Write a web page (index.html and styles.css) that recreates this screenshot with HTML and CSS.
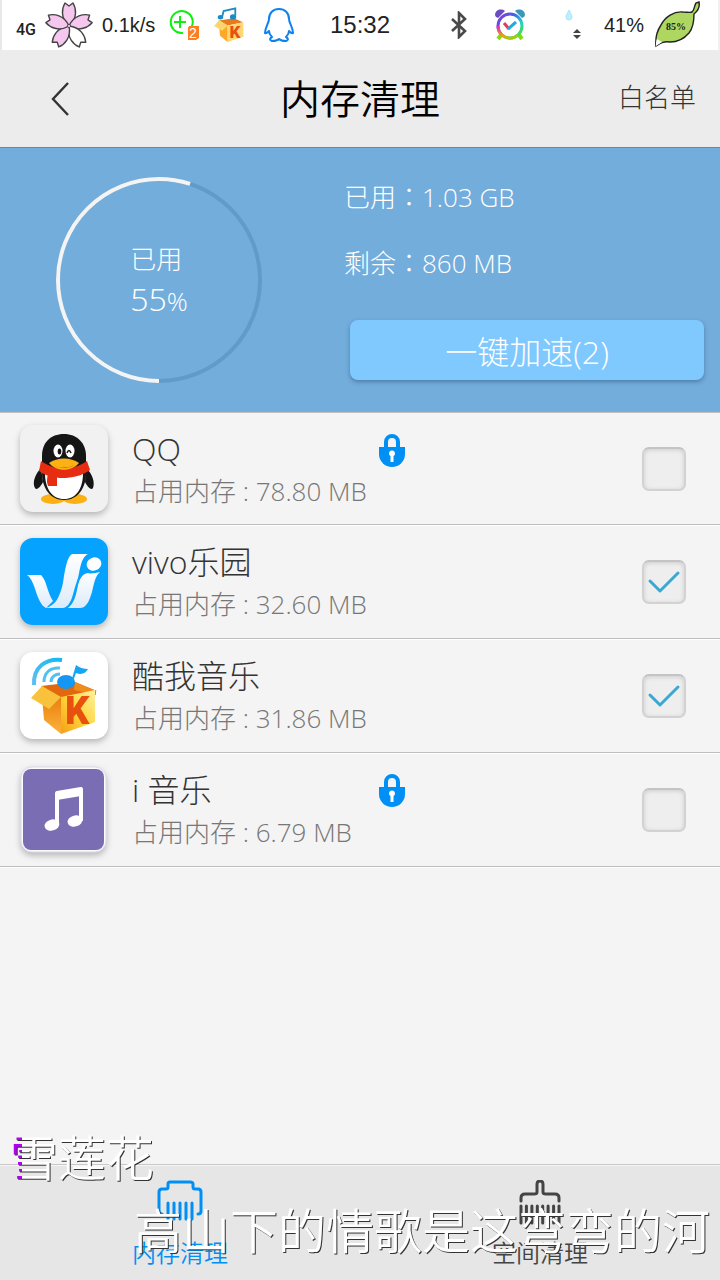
FILE: index.html
```html
<!DOCTYPE html>
<html lang="zh-CN">
<head>
  <meta charset="utf-8">
  <meta name="viewport" content="width=device-width, initial-scale=1">
  <title>内存清理</title>
  <link rel="stylesheet" href="styles.css">
</head>
<body>
  <div class="screen">
    <div class="status-bar">
      <div class="status-left">
        <span class="network">4G</span>
        <svg class="flower" width="48" height="48" viewBox="0 0 48 48" fill="#f5c6ee" stroke="#444" stroke-width="1.4" stroke-linejoin="round">
          <path d="M24 25C15 17 17 7 20 2l4 3 4-3c3 5 5 15-4 23z"/>
          <path transform="rotate(72 24 25)" d="M24 25C15 17 17 7 20 2l4 3 4-3c3 5 5 15-4 23z"/>
          <path transform="rotate(144 24 25)" fill="#fff" d="M24 25C15 17 17 7 20 2l4 3 4-3c3 5 5 15-4 23z"/>
          <path transform="rotate(216 24 25)" d="M24 25C15 17 17 7 20 2l4 3 4-3c3 5 5 15-4 23z"/>
          <path transform="rotate(288 24 25)" d="M24 25C15 17 17 7 20 2l4 3 4-3c3 5 5 15-4 23z"/>
          <circle cx="24" cy="25" r="1.5" fill="#fff" stroke-width="1"/>
        </svg>
        <span class="speed">0.1k/s</span>
        <svg class="battery-guard" width="32" height="32" viewBox="0 0 32 32">
          <path d="M23 19A11 11 0 1 0 15 24" fill="none" stroke="#0cf00c" stroke-width="2"/>
          <path d="M12 7v12M6 13h12" stroke="#0cf00c" stroke-width="2"/>
          <path d="M21 17h10v12l-3 2h-8V19z" fill="#ff7f1e"/>
          <text x="21" y="29" class="badge-text">2</text>
        </svg>
        <svg class="mini-box" width="36" height="36" viewBox="9 4 70 80">
          <path d="M21 34L55 29 75 38 41 45z" fill="#e67a1c"/>
          <path d="M22 45l19 0v37L24 68z" fill="#ffa726"/>
          <path d="M41 45l35-7v32L41 82z" fill="#ffd873"/>
          <path d="M11 46l11-13 19 12-12 12z" fill="#fbd66d"/>
          <path d="M29 25l3-12 26-6v16" fill="none" stroke="#1a8cc4" stroke-width="4"/>
          <ellipse cx="25" cy="27" rx="6" ry="5" fill="#1a8cc4"/>
          <ellipse cx="53" cy="26" rx="7" ry="6" fill="#1a8cc4"/>
          <text x="45" y="73" class="box-letter">K</text>
        </svg>
        <svg class="mini-qq" width="30" height="34" viewBox="0 0 30 34" fill="none" stroke="#0d80f2" stroke-width="2" stroke-linejoin="round">
          <path d="M15 1C9 1 5 5 5 11c0 4-4 8-4 14 1 1 3-1 4-2 0 3 1 4 3 6-2 1-3 3 0 4 3 0 5 0 7-2 2 2 4 2 7 2 3-1 2-3 0-4 2-2 3-3 3-6 1 1 3 3 4 2 0-6-4-10-4-14C25 5 21 1 15 1z"/>
        </svg>
      </div>
      <span class="clock">15:32</span>
      <div class="status-right">
        <svg class="bluetooth" width="16" height="28" viewBox="0 0 16 28" fill="none" stroke="#4a4a4a" stroke-width="2.6">
          <path d="M1 8l13 12-6 6V2l6 6L1 20"/>
        </svg>
        <svg class="alarm" width="30" height="34" viewBox="0 0 30 34">
          <defs>
            <linearGradient id="rainbow" x1="0" y1="0" x2="1" y2="1">
              <stop offset="0" stop-color="#9b30d9"/>
              <stop offset=".35" stop-color="#3d63e8"/>
              <stop offset=".65" stop-color="#21cfd0"/>
              <stop offset="1" stop-color="#5ae014"/>
            </linearGradient>
            <linearGradient id="warm" x1="1" y1="1" x2="0" y2="0">
              <stop offset="0" stop-color="#7fdd10"/>
              <stop offset=".5" stop-color="#f8a000"/>
              <stop offset="1" stop-color="#e52cb6"/>
            </linearGradient>
          </defs>
          <path d="M0 7C0 2 6 0 10 3L3 10Q0 9 0 7z" fill="#684cc0"/>
          <path d="M30 7c0-5-6-7-10-4l7 7q3-1 3-3z" fill="#3b98b9"/>
          <path d="M6 27l-3 4M24 27l3 4" stroke="#7fdd10" stroke-width="4"/>
          <circle cx="15" cy="18" r="12" fill="#fff" stroke="url(#rainbow)" stroke-width="3"/>
          <path d="M3 18a12 12 0 0 0 20 9" fill="none" stroke="url(#warm)" stroke-width="3"/>
          <path d="M9 15l5 6" stroke="#e63b52" stroke-width="3"/>
          <path d="M13 21l8-7" stroke="#28a8e0" stroke-width="3"/>
        </svg>
        <svg class="drop" width="18" height="30" viewBox="0 0 18 30">
          <path d="M4 0c2 4 3 5 3 7a3 3 0 0 1-6 0c0-2 1-3 3-7z" fill="#bcefff" stroke="#a8e8f8"/>
          <path d="M12 19l4 4H8zM12 29l4-4H8z" fill="#444"/>
        </svg>
        <span class="percent">41%</span>
        <svg class="leaf" width="46" height="48" viewBox="0 0 46 48">
          <path d="M2 45C1 36 3 30 7 24 11 16 20 10 29 11c4 0 7 1 9 0 3-3 2-6 4-9l3-1c1 5-1 9-5 12 0 7-1 14-5 19-6 7-12 9-19 9-6-1-9 1-14 4z" fill="#add760" stroke="#222" stroke-width="1.4"/>
          <path d="M2 45c0-3 0-5 1-7l5 3z" fill="#fff"/>
          <text x="22" y="29" text-anchor="middle" class="leaf-text">85%</text>
        </svg>
      </div>
    </div>

    <header class="title-bar">
      <button type="button" class="back" aria-label="返回">
        <svg width="20" height="34" viewBox="0 0 20 34" fill="none" stroke="#333" stroke-width="2.4">
          <path d="M18 1L3 17l15 16"/>
        </svg>
      </button>
      <h1>内存清理</h1>
      <a href="#" class="whitelist">白名单</a>
    </header>

    <section class="summary">
      <div class="ring">
        <svg viewBox="0 0 206 206" fill="none" stroke-width="4">
          <circle cx="103" cy="103" r="101" stroke="#609bca"/>
          <circle class="ring-used" cx="103" cy="103" r="101" pathLength="100"/>
        </svg>
        <div class="ring-label">
          <div class="ring-title">已用</div>
          <div class="ring-value">55<small>%</small></div>
        </div>
      </div>
      <div class="details">
        <p lang="zh-TW">已用：1.03 GB</p>
        <p lang="zh-TW">剩余：860 MB</p>
        <button type="button" class="boost">一键加速(2)</button>
      </div>
    </section>

    <ul class="apps">
      <li>
        <svg class="app-icon" viewBox="0 0 88 88">
          <rect width="88" height="87" rx="13" fill="#f1f1f1"/>
          <ellipse cx="33" cy="74" rx="12" ry="5" fill="#fbb014"/>
          <ellipse cx="55" cy="74" rx="12" ry="5" fill="#fbb014"/>
          <path d="M21 43C15 49 12 58 15 63c2 3 6-2 8-6zM66 43c7 6 9 15 7 20-2 3-6-2-8-6z" fill="#151515"/>
          <path d="M44 9C30 9 22 18 22 31v17c0 16 9 27 22 27s22-11 22-27V31C66 18 57 9 44 9z" fill="#151515"/>
          <path d="M25 48c0 16 7 26 19 26s19-10 19-26z" fill="#fff"/>
          <path d="M21 36c14 10 32 10 46 0l3 9c-8 6-19 8-27 8-9 0-17-2-24-7z" fill="#e62d12"/>
          <path d="M28 49l9 3v9h-9q-2-5 0-12z" fill="#e62d12"/>
          <ellipse cx="38" cy="26" rx="4.5" ry="6.5" fill="#fff"/>
          <ellipse cx="50" cy="26" rx="4.5" ry="6.5" fill="#fff"/>
          <ellipse cx="39.5" cy="26.5" rx="1.8" ry="3" fill="#111"/>
          <path d="M47 28q2-5 4 0" fill="none" stroke="#111" stroke-width="1.5"/>
          <path d="M29 38c8-6 22-6 30 0-7 9-23 9-30 0z" fill="#fbb014"/>
          <path d="M33 40q11 5 22 0-10 6-22 0z" fill="#a0470a"/>
        </svg>
        <label class="info" for="app-qq">
          <span class="name">QQ</span>
          <span class="usage">占用内存 : 78.80 MB</span>
        </label>
        <div class="lock">
          <svg width="26" height="34" viewBox="0 0 26 34">
            <path d="M7 15V9a6 6 0 0 1 12 0v6" fill="none" stroke="#0090f5" stroke-width="4"/>
            <path d="M0 14h26v7a13 13 0 0 1-26 0z" fill="#0090f5"/>
            <path d="M11.5 23a3 3 0 1 1 3 0v6h-3z" fill="#fff"/>
          </svg>
        </div>
        <input type="checkbox" id="app-qq">
      </li>
      <li>
        <svg class="app-icon" viewBox="0 0 88 88">
          <defs>
            <linearGradient id="ribbon" x1="0" y1="0" x2="0" y2="1">
              <stop offset="0" stop-color="#fff"/>
              <stop offset="1" stop-color="#dcebf9"/>
            </linearGradient>
          </defs>
          <rect width="88" height="87" rx="13" fill="#05a2ff"/>
          <path d="M7 37h14c6 6 6 17 12 26l-7 7c-10-5-10-27-19-33z" fill="url(#ribbon)"/>
          <path d="M25 70c11-2 15-12 18-25 2-14 4-26 9-29h16c-8 4-8 18-11 29-3 15-6 24-14 25z" fill="url(#ribbon)"/>
          <path d="M80 34c-5 4-6 12-8 20-3 10-6 16-12 16H47c7-3 9-13 11-23 2-8 4-12 9-12 4 1 9 0 13-1z" fill="url(#ribbon)"/>
          <path d="M46 70c7-4 8-15 11-24 2-7 5-11 10-12" fill="none" stroke="#05a2ff" stroke-width="2"/>
          <ellipse cx="74" cy="26" rx="7.5" ry="6.5" fill="#fff" transform="rotate(-20 74 26)"/>
        </svg>
        <label class="info" for="app-vivo">
          <span class="name">vivo乐园</span>
          <span class="usage">占用内存 : 32.60 MB</span>
        </label>
        <div class="lock"></div>
        <input type="checkbox" id="app-vivo" checked>
      </li>
      <li>
        <svg class="app-icon" viewBox="0 0 88 88">
          <defs>
            <linearGradient id="box-left" x1="0" y1="0" x2="0" y2="1">
              <stop offset="0" stop-color="#e97d0c"/>
              <stop offset="1" stop-color="#fbb53c"/>
            </linearGradient>
            <linearGradient id="box-front" x1="0" y1="1" x2="1" y2="0">
              <stop offset="0" stop-color="#f79d16"/>
              <stop offset=".5" stop-color="#ffd63c"/>
              <stop offset="1" stop-color="#fff0a0"/>
            </linearGradient>
            <linearGradient id="wave" x1="1" y1="0" x2="0" y2="1">
              <stop offset="0" stop-color="#12b8f5"/>
              <stop offset="1" stop-color="#62bff0"/>
            </linearGradient>
          </defs>
          <rect width="88" height="87" rx="13" fill="#fff"/>
          <path d="M21 34L55 30 77 39 41 46z" fill="#e2670d"/>
          <path d="M55 30l21 9v4l-22-5z" fill="#f08c1c"/>
          <path d="M22 44l19 1v37L24 68z" fill="url(#box-left)"/>
          <path d="M41 45l34-7v32L41 82z" fill="url(#box-front)"/>
          <path d="M11 46l11-12 19 11-12 12z" fill="#f9c23c"/>
          <path d="M14 33C13 15 26 6 42 8" fill="none" stroke="url(#wave)" stroke-width="4"/>
          <path d="M24 30c0-9 6-15 16-14M31 30c0-5 4-8 9-8" fill="none" stroke="#52c0f2" stroke-width="3"/>
          <ellipse cx="46" cy="30" rx="9" ry="7" fill="#1596f2"/>
          <path d="M51 30l5-17q5 4 12 4-4 7-12 4l-4 11z" fill="#12a7f5"/>
          <text x="45" y="72" class="box-letter">K</text>
        </svg>
        <label class="info" for="app-kuwo">
          <span class="name">酷我音乐</span>
          <span class="usage">占用内存 : 31.86 MB</span>
        </label>
        <div class="lock"></div>
        <input type="checkbox" id="app-kuwo" checked>
      </li>
      <li>
        <svg class="app-icon" viewBox="0 0 88 88">
          <rect x="1" y="1" width="85" height="85" rx="11" fill="#fbfaff" stroke="#dcd9ea"/>
          <rect x="3" y="3" width="81" height="81" rx="8" fill="#7a6db4"/>
          <path d="M37 59V27l24-4v32" fill="none" stroke="#fff" stroke-width="4" stroke-linejoin="round"/>
          <path d="M37 26l24-4v8l-24 4z" fill="#fff"/>
          <ellipse cx="32" cy="59" rx="7.5" ry="5.5" fill="#fff" transform="rotate(-15 32 59)"/>
          <ellipse cx="55" cy="55" rx="7.5" ry="5.5" fill="#fff" transform="rotate(-15 55 55)"/>
        </svg>
        <label class="info" for="app-imusic">
          <span class="name">i 音乐</span>
          <span class="usage">占用内存 : 6.79 MB</span>
        </label>
        <div class="lock">
          <svg width="26" height="34" viewBox="0 0 26 34">
            <path d="M7 15V9a6 6 0 0 1 12 0v6" fill="none" stroke="#0090f5" stroke-width="4"/>
            <path d="M0 14h26v7a13 13 0 0 1-26 0z" fill="#0090f5"/>
            <path d="M11.5 23a3 3 0 1 1 3 0v6h-3z" fill="#fff"/>
          </svg>
        </div>
        <input type="checkbox" id="app-imusic">
      </li>
    </ul>

    <nav class="tabs">
      <a href="#" class="tab active">
        <svg width="46" height="46" viewBox="0 0 46 46" fill="none" stroke="currentColor" stroke-width="3" stroke-linecap="round" stroke-linejoin="round">
          <path d="M5 34Q2 34 2 30V12q0-3 3-3h4q2 0 2-2V4q0-2 2-2h20q3 0 3 2v3q0 2 2 2h3q3 0 3 3v19q0 3-3 3"/>
          <path d="M11 23v16M17 23v16M23 23v16M29 23v16M35 23v16"/>
        </svg>
        <span>内存清理</span>
      </a>
      <a href="#" class="tab">
        <svg width="42" height="46" viewBox="0 0 42 46" fill="none" stroke="currentColor" stroke-width="3" stroke-linecap="round" stroke-linejoin="round">
          <path d="M2 21v-3q0-4 4-4h9q3 0 3-2V4q0-3 3-3t3 3v8q0 2 3 2h9q4 0 4 4v3"/>
          <path d="M2 26v17M7.4 26v17M12.9 26v17M18.3 26v17M23.7 26v17M29.1 26v17M34.6 26v17M40 26v17"/>
        </svg>
        <span>空间清理</span>
      </a>
    </nav>

    <!-- desktop lyrics float over the page -->
    <div class="lyrics">
      <p class="line sung">雪莲花</p>
      <p class="line next">高山下的情歌是这弯弯的河</p>
    </div>
  </div>
</body>
</html>
```
FILE: styles.css
```css
* {
  box-sizing: border-box;
}

body {
  margin: 0;
  background: #f4f4f4;
  color: #333;
  font-family: "Open Sans", "Noto Sans CJK SC", sans-serif;
  font-weight: 300;
}

h1, p, ul {
  margin: 0;
  padding: 0;
  font-weight: inherit;
}

button {
  border: none;
  font: inherit;
  cursor: pointer;
}

a {
  color: inherit;
  text-decoration: none;
}

svg {
  display: block;
  flex-shrink: 0;
}

.screen {
  position: relative;
  display: flex;
  flex-direction: column;
  min-height: 100vh;
}

/* status bar */
.status-bar {
  display: grid;
  grid-template-columns: 1fr auto 1fr;
  align-items: center;
  height: 50px;
  padding: 0 14px;
  background: #fff;
  border-left: 2px solid #e8e8e6;
  border-right: 2px solid #f0f0f0;
  color: #222;
  font-family: "Liberation Sans", sans-serif;
  font-size: 20px;
  font-weight: 400;
}

.status-left,
.status-right {
  display: flex;
  align-items: center;
}

.status-left {
  gap: 9px;
}

.status-right {
  justify-content: flex-end;
  gap: 24px;
}

.network {
  font-family: Roboto, sans-serif;
  font-size: 16px;
  font-weight: 500;
  padding-top: 8px;
}

.speed {
  padding-right: 4px;
}

.mini-box {
  margin-left: 2px;
}

.mini-qq {
  margin-left: 8px;
}

.clock {
  font-size: 24px;
}

.alarm {
  margin: 0 16px 0 4px;
}

.drop {
  margin-right: -3px;
}

.leaf {
  margin: 0 4px 0 -14px;
}

.badge-text {
  fill: #fff;
  font: 14px "Liberation Sans", sans-serif;
}

.leaf-text {
  fill: #222;
  font: bold 10px "Liberation Serif", serif;
}

.box-letter {
  fill: #e8500f;
  font: 900 38px Roboto, sans-serif;
}

/* title bar */
.title-bar {
  display: grid;
  grid-template-columns: 1fr auto 1fr;
  align-items: center;
  height: 98px;
  padding: 0 24px;
  background: #ececec;
  border-bottom: 1px solid #4a90c4;
}

.title-bar h1 {
  color: #000;
  font-size: 40px;
  font-weight: 350;
  line-height: 60px;
}

.back {
  justify-self: start;
  padding: 0 26px;
  background: none;
}

.whitelist {
  justify-self: end;
  padding-bottom: 6px;
  font-size: 26px;
}

/* memory summary */
.summary {
  display: flex;
  gap: 82px;
  height: 264px;
  padding: 29px 16px 0 56px;
  background: #73addc;
  color: #fff;
}

.ring {
  display: grid;
  place-items: center;
  width: 206px;
  height: 206px;
}

.ring > * {
  grid-area: 1 / 1;
}

.ring svg {
  width: 100%;
  height: 100%;
}

.ring-used {
  stroke: #f4f4f4;
  stroke-dasharray: 55 100;
  transform: rotate(90deg);
  transform-origin: center;
}

.ring-title {
  font-size: 26px;
  line-height: 40px;
}

.ring-value {
  font-size: 32px;
  line-height: 40px;
}

.ring-value small {
  font-size: 26px;
}

.details {
  flex: 1;
  display: flex;
  flex-direction: column;
}

.details p {
  font-family: "Open Sans", "Noto Sans CJK TC", sans-serif;
  font-size: 26px;
  line-height: 40px;
  margin-bottom: 26px;
}

.boost {
  height: 60px;
  margin: 11px 0 0 6px;
  border-radius: 8px;
  background: #7fc9ff;
  box-shadow: 0 2px 4px rgba(40, 80, 120, 0.5);
  color: #fff;
  font-size: 32px;
}

/* app list */
.apps {
  flex: 1;
  list-style: none;
  border-top: 1px solid #c0c0c0;
  margin-bottom: 20px;
}

.apps li {
  display: flex;
  align-items: center;
  height: 114px;
  padding: 0 34px 0 20px;
  border-bottom: 1px solid #bdbdbd;
  box-shadow: 0 1px 0 #fff;
}

.apps li:first-child {
  height: 112px;
}

.app-icon {
  width: 88px;
  height: 88px;
  margin-right: 24px;
  filter: drop-shadow(0 3px 3px rgba(0, 0, 0, 0.25));
}

.info {
  flex: 16;
  display: flex;
  flex-direction: column;
  padding-top: 2px;
  white-space: nowrap;
  min-width: 0;
}

.name {
  font-size: 32px;
  line-height: 42px;
}

.usage {
  color: #777;
  font-size: 26px;
  line-height: 42px;
}

.lock {
  flex: 17;
  align-self: flex-start;
  padding-top: 20px;
}

.apps input {
  appearance: none;
  width: 44px;
  height: 44px;
  margin: 0;
  border: 2px solid #d2d2d2;
  border-top-color: #c4c4c4;
  border-radius: 7px;
  background: #eee;
  box-shadow: inset 0 1px 4px rgba(0, 0, 0, 0.15);
}

.apps input:checked {
  background: #eee url("data:image/svg+xml,%3Csvg xmlns='http://www.w3.org/2000/svg' viewBox='0 0 40 40' fill='none' stroke='%2339a9d4' stroke-width='3' stroke-linecap='round' stroke-linejoin='round'%3E%3Cpath d='M6 19l10 10 18-18'/%3E%3C/svg%3E") center no-repeat;
}

/* bottom tabs */
.tabs {
  display: flex;
  height: 116px;
  background: #e6e6e6;
  border-top: 1px solid #c8c8c8;
  box-shadow: inset 0 1px 0 #f6f6f6;
}

.tab {
  flex: 1;
  display: flex;
  flex-direction: column;
  align-items: center;
  padding-top: 15px;
  color: #444;
  font-size: 24px;
  font-weight: 350;
  line-height: 54px;
}

.tab.active {
  color: #0090f5;
}

/* lyrics */
.lyrics {
  position: absolute;
  left: 10px;
  right: 10px;
  bottom: 13px;
  color: #fff;
  font-size: 48px;
  line-height: 73px;
  pointer-events: none;
}

.line {
  width: max-content;
  font-weight: 350;
  filter: drop-shadow(1px 1px 0 #333);
}

.sung {
  background: linear-gradient(to right, #b400f0 12px, #fff 12px);
  -webkit-background-clip: text;
  background-clip: text;
  color: transparent;
}

.next {
  margin-left: auto;
}
```
